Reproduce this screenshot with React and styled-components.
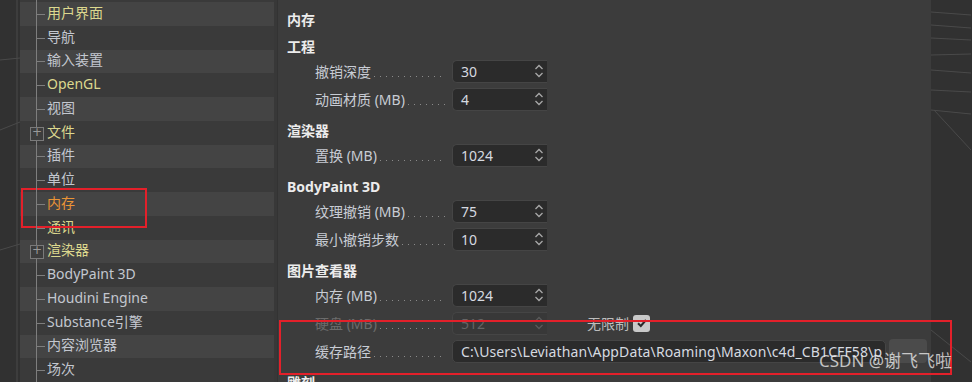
import styled, { createGlobalStyle } from "styled-components";

const GlobalStyle = createGlobalStyle`
  html, body { margin: 0; padding: 0; background: #303030; }
  * { box-sizing: border-box; }
`;

const treeItems = [
  { label: "用户界面", tone: "mod" },
  { label: "导航" },
  { label: "输入装置" },
  { label: "OpenGL", tone: "mod" },
  { label: "视图" },
  { label: "文件", tone: "mod", expand: true },
  { label: "插件" },
  { label: "单位" },
  { label: "内存", tone: "active" },
  { label: "通讯", tone: "mod" },
  { label: "渲染器", tone: "mod", expand: true },
  { label: "BodyPaint 3D" },
  { label: "Houdini Engine" },
  { label: "Substance引擎" },
  { label: "内容浏览器" },
  { label: "场次" },
];

const sections = [
  {
    title: "工程",
    rows: [
      { label: "撤销深度", value: "30" },
      { label: "动画材质 (MB)", value: "4" },
    ],
  },
  { title: "渲染器", rows: [{ label: "置换 (MB)", value: "1024" }] },
  {
    title: "BodyPaint 3D",
    rows: [
      { label: "纹理撤销 (MB)", value: "75" },
      { label: "最小撤销步数", value: "10" },
    ],
  },
  {
    title: "图片查看器",
    rows: [
      { label: "内存 (MB)", value: "1024" },
      { label: "硬盘 (MB)", value: "512", disabled: true, unlimited: true },
      { label: "缓存路径", path: "C:\\Users\\Leviathan\\AppData\\Roaming\\Maxon\\c4d_CB1CFF58\\p" },
    ],
  },
  { title: "雕刻", rows: [] },
];

const toneColor = {
  mod: "#dcd88e",
  active: "#ea9436",
  plain: "#c3c7cf",
};

// faint viewport lines behind the dialog
const Scratches = ({ lines }) => (
  <svg width="100%" height="100%" preserveAspectRatio="none">
    {lines.map((l, i) => (
      <line key={i} x1={l[0]} y1={l[1]} x2={l[2]} y2={l[3]} stroke="#4a4a4a" strokeWidth="1" />
    ))}
  </svg>
);

const Spinner = ({ dim }) => (
  <svg width="10" height="16" viewBox="0 0 10 16">
    <path d="M1.5 6 L5 2.5 L8.5 6" fill="none" stroke={dim ? "#5a5a5a" : "#a8a8a8"} strokeWidth="1.3" />
    <path d="M1.5 10 L5 13.5 L8.5 10" fill="none" stroke={dim ? "#5a5a5a" : "#a8a8a8"} strokeWidth="1.3" />
  </svg>
);

const App = () => {
  return (
    <>
      <GlobalStyle />
      <Page>
        <Gutter $w={20}>
          <Scratches lines={[[17, 0, 17, 382], [0, 60, 20, 58], [0, 130, 20, 122], [0, 250, 20, 244]]} />
        </Gutter>

        <Tree>
          {treeItems.map((item, i) => (
            <TreeRow key={item.label} $stripe={i % 2 === 0}>
              <Branch $expand={item.expand} />
              <TreeLabel $tone={item.tone || "plain"}>{item.label}</TreeLabel>
            </TreeRow>
          ))}
        </Tree>

        <Splitter />

        <Panel>
          <MainTitle>内存</MainTitle>
          {sections.map((s) => (
            <Section key={s.title}>
              <SectionTitle>{s.title}</SectionTitle>
              {s.rows.map((r) => (
                <Row key={r.label}>
                  <Label $disabled={r.disabled}>
                    <span>{r.label}</span>
                    <Leader />
                  </Label>
                  {r.path ? (
                    <>
                      <PathField>{r.path}</PathField>
                      <BrowseButton />
                    </>
                  ) : (
                    <NumberField $disabled={r.disabled}>
                      <span>{r.value}</span>
                      <Spinner dim={r.disabled} />
                    </NumberField>
                  )}
                  {r.unlimited && (
                    <Unlimited>
                      无限制
                      <CheckBox>
                        <svg width="12" height="12" viewBox="0 0 12 12">
                          <path d="M2 6.2 L4.8 9 L10 3" fill="none" stroke="#2a2a2a" strokeWidth="2" />
                        </svg>
                      </CheckBox>
                    </Unlimited>
                  )}
                </Row>
              ))}
            </Section>
          ))}
        </Panel>

        <Gutter $w={40}>
          <Scratches lines={[[0, 12, 40, 15], [0, 25, 40, 28], [0, 38, 40, 40], [0, 55, 40, 54], [0, 70, 40, 73], [0, 90, 40, 92], [0, 110, 40, 114], [3, 110, 40, 150], [0, 330, 40, 362]]} />
        </Gutter>

        <RedBox $x={21} $y={188} $w={126} $h={40} />
        <RedBox $x={279} $y={320} $w={673} $h={55} />
        <Watermark>CSDN @谢飞飞啦</Watermark>
      </Page>
    </>
  );
};

//--- Styling ---

const Page = styled.div`
position: relative;
display: flex;
width: 972px;
height: 382px;
overflow: hidden;
background: #303030;
font-family: "Noto Sans", "Noto Sans CJK SC", sans-serif;
font-size: 14px;
`

const Gutter = styled.div`
flex: 0 0 ${(p) => p.$w}px;
height: 100%;
background: #313131;
`

const Tree = styled.div`
position: relative;
flex: 0 0 254px;
padding-top: 2px;
background: #3a3a3a;

&::before {
    content: "";
    position: absolute;
    left: 16px;
    top: 0;
    bottom: 0;
    width: 1px;
    background: #7e7e7e;
    z-index: 1;
}
`

const TreeRow = styled.div`
display: flex;
align-items: center;
height: 23.75px;
padding-left: 10px;
background: ${(p) => (p.$stripe ? "#444444" : "#3a3a3a")};
`

const Branch = styled.div`
position: relative;
flex: 0 0 15px;
height: 12px;
margin-right: 2px;

&::after {
    content: "";
    position: absolute;
    left: 7px;
    top: 6px;
    width: 8px;
    height: 1px;
    background: #7e7e7e;
    display: ${(p) => (p.$expand ? "none" : "block")};
}

${(p) =>
    p.$expand &&
    `
    &::before {
        content: "+";
        position: absolute;
        left: 0;
        top: 0;
        width: 12px;
        height: 12px;
        border: 1px solid #7a7a7a;
        background: #3d3d3d;
        color: #9a9a9a;
        font: 12px/9px "DejaVu Sans", sans-serif;
        text-align: center;
        z-index: 2;
    }
`}
`

const TreeLabel = styled.span`
color: ${(p) => toneColor[p.$tone]};
white-space: nowrap;
line-height: 18px;
margin-top: -2px;
`

const Splitter = styled.div`
flex: 0 0 4px;
background: #383838;
border-right: 1px solid #333333;
`

const Panel = styled.div`
flex: 0 0 653px;
padding: 10px 0 0 9px;
background: #3c3c3c;
color: #c8ccd4;
overflow: hidden;
`

const MainTitle = styled.div`
height: 19px;
line-height: 19px;
font-weight: bold;
color: #ececec;
`

const Section = styled.div`
margin-top: 8px;
`

const SectionTitle = styled.div`
height: 20px;
line-height: 20px;
font-weight: bold;
color: #ececec;
`

const Row = styled.div`
display: flex;
align-items: center;
height: 28px;
padding-left: 28px;
white-space: nowrap;
`

const Label = styled.div`
display: flex;
align-items: center;
flex: 0 0 130px;
margin-right: 7px;
color: ${(p) => (p.$disabled ? "#6c6c6c" : "#c8ccd4")};
`

const Leader = styled.div`
flex: 1;
height: 1px;
margin: 0 0 0 3px;
transform: translateY(5px);
background-image: linear-gradient(to right, #8a8a8a 0 1px, transparent 1px 100%);
background-size: 6px 1px;
background-repeat: repeat-x;
`

const NumberField = styled.div`
display: flex;
align-items: center;
justify-content: space-between;
width: 95px;
height: 23px;
padding: 0 3px 0 8px;
background: ${(p) => (p.$disabled ? "#383838" : "#2b2b2b")};
border: 1px solid #454545;
border-right: none;
border-radius: 5px 0 0 5px;
color: ${(p) => (p.$disabled ? "#656565" : "#d6dae0")};
`

const PathField = styled.div`
width: 434px;
height: 23px;
line-height: 21px;
padding: 0 4px 0 8px;
overflow: hidden;
white-space: nowrap;
background: #2b2b2b;
border: 1px solid #454545;
border-radius: 5px;
color: #d6dae0;
letter-spacing: 0.12px;
`

const BrowseButton = styled.div`
width: 38px;
height: 24px;
margin-left: 3px;
background: #4b4b4b;
border-radius: 4px;
`

const Unlimited = styled.div`
display: flex;
align-items: center;
gap: 4px;
margin-left: 40px;
color: #bdbdbd;
`

const CheckBox = styled.div`
display: flex;
align-items: center;
justify-content: center;
width: 17px;
height: 17px;
background: #c9c9c9;
border-radius: 3px;
`

const RedBox = styled.div`
position: absolute;
left: ${(p) => p.$x}px;
top: ${(p) => p.$y}px;
width: ${(p) => p.$w}px;
height: ${(p) => p.$h}px;
border: 2px solid #e3202a;
pointer-events: none;
`

const Watermark = styled.div`
position: absolute;
left: 819px;
top: 350px;
font-size: 17px;
line-height: 22px;
color: rgba(235, 235, 235, 0.78);
white-space: nowrap;
`

export default App;
